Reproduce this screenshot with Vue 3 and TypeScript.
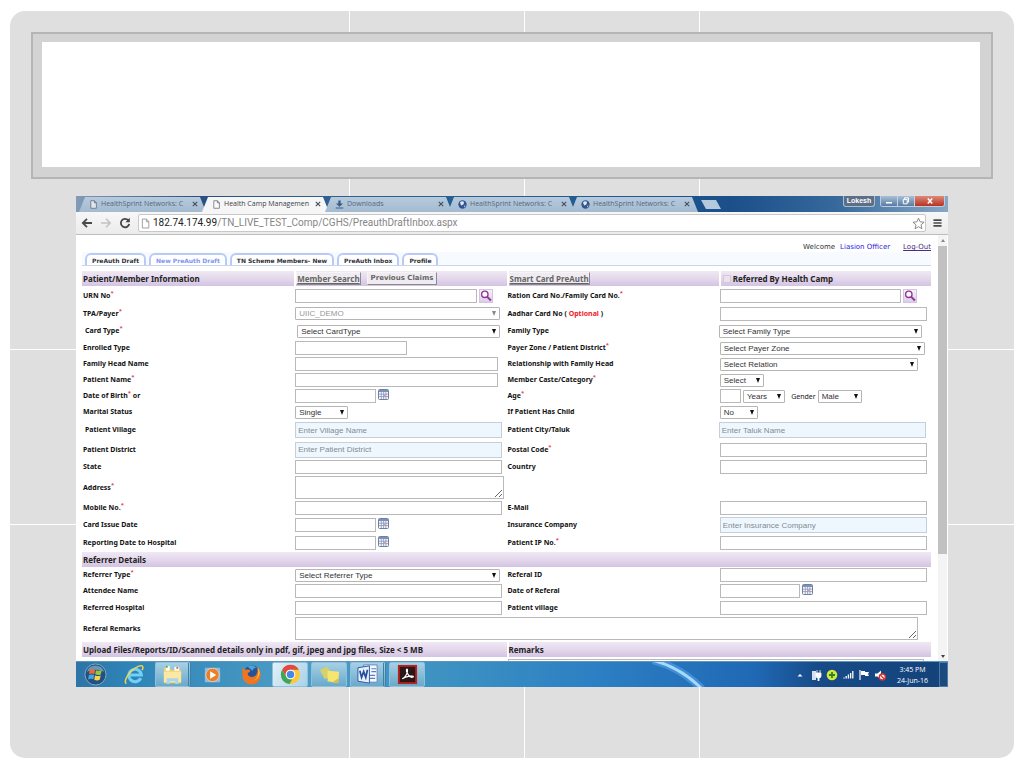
<script setup lang="ts">
type Kind = 'text' | 'select' | 'area' | 'calendar' | 'search' | 'note'

interface Control {
  kind: Kind
  id?: string
  size?: string
  value?: string
  hint?: string
  name?: string
  disabled?: boolean
}

interface Field {
  label: string
  required?: boolean
  after?: string
  optional?: boolean
  indent?: boolean
  controls: Control[]
}

interface Row {
  size: string
  fields: Field[]
  wide?: boolean
}

const text = (id: string, size = 'w98'): Control => ({ kind: 'text', id, size })
const hint = (id: string, placeholder: string): Control => ({ kind: 'text', id, size: 'w98 tinted', hint: placeholder })
const select = (id: string, value: string, size: string): Control => ({ kind: 'select', id, value, size })
const date = (id: string): Control[] => [{ kind: 'text', id, size: 'w38' }, { kind: 'calendar', name: 'Pick a date' }]

const patientRows: Row[] = [
  { size: 'h18', fields: [
    { label: 'URN No', required: true, controls: [text('urn', 'w86'), { kind: 'search', name: 'Find URN' }] },
    { label: 'Ration Card No./Family Card No.', required: true, controls: [text('ration', 'w86'), { kind: 'search', name: 'Find card' }] } ] },
  { size: 'h17', fields: [
    { label: 'TPA/Payer', required: true, controls: [{ kind: 'select', id: 'payer', value: 'UIIC_DEMO', size: 'w97', disabled: true }] },
    { label: 'Aadhar Card No', optional: true, controls: [text('aadhar')] } ] },
  { size: 'h18', fields: [
    { label: 'Card Type', required: true, indent: true, controls: [select('cardtype', 'Select CardType', 'w96 inset')] },
    { label: 'Family Type', controls: [select('familytype', 'Select Family Type', 'w96 outset')] } ] },
  { size: 'h16', fields: [
    { label: 'Enrolled Type', controls: [text('enrolled', 'w53')] },
    { label: 'Payer Zone / Patient District', required: true, controls: [select('zone', 'Select Payer Zone', 'w97')] } ] },
  { size: 'h16', fields: [
    { label: 'Family Head Name', controls: [text('head', 'w96')] },
    { label: 'Relationship with Family Head', controls: [select('relation', 'Select Relation', 'w94')] } ] },
  { size: 'h16', fields: [
    { label: 'Patient Name', required: true, controls: [text('patient', 'w96')] },
    { label: 'Member Caste/Category', required: true, controls: [select('caste', 'Select', 'w21')] } ] },
  { size: 'h16', fields: [
    { label: 'Date of Birth', required: true, after: 'or', controls: date('dob') },
    { label: 'Age', required: true, controls: [
      text('age', 'w10'),
      { kind: 'select', id: 'ageunit', value: 'Years', size: 'w20', name: 'Age unit' },
      { kind: 'note', id: 'gender', value: 'Gender' },
      select('gender', 'Male', 'w21') ] } ] },
  { size: 'h16', fields: [
    { label: 'Marital Status', controls: [select('marital', 'Single', 'w25')] },
    { label: 'If Patient Has Child', controls: [select('child', 'No', 'w18')] } ] },
  { size: 'h20', fields: [
    { label: 'Patient Village', indent: true, controls: [hint('village', 'Enter Village Name')] },
    { label: 'Patient City/Taluk', controls: [{ kind: 'text', id: 'taluk', size: 'w98 tinted outset', hint: 'Enter Taluk Name' }] } ] },
  { size: 'h19', fields: [
    { label: 'Patient District', controls: [hint('district', 'Enter Patient District')] },
    { label: 'Postal Code', required: true, controls: [text('postal')] } ] },
  { size: 'h16', fields: [
    { label: 'State', controls: [text('state')] },
    { label: 'Country', controls: [text('country')] } ] },
  { size: 'h25', fields: [
    { label: 'Address', required: true, controls: [{ kind: 'area', id: 'address', size: 'w99' }] } ] },
  { size: 'h16', fields: [
    { label: 'Mobile No.', required: true, controls: [text('mobile')] },
    { label: 'E-Mail', controls: [text('email')] } ] },
  { size: 'h18', fields: [
    { label: 'Card Issue Date', controls: date('issued') },
    { label: 'Insurance Company', controls: [hint('insurer', 'Enter Insurance Company')] } ] },
  { size: 'h17', fields: [
    { label: 'Reporting Date to Hospital', controls: date('reporting') },
    { label: 'Patient IP No.', required: true, controls: [text('ip')] } ] }
]

const referrerRows: Row[] = [
  { size: 'h16', fields: [
    { label: 'Referrer Type', required: true, controls: [select('referrer', 'Select Referrer Type', 'w97')] },
    { label: 'Referal ID', controls: [text('referalid')] } ] },
  { size: 'h16', fields: [
    { label: 'Attendee Name', controls: [text('attendee')] },
    { label: 'Date of Referal', controls: date('referaldate') } ] },
  { size: 'h17', fields: [
    { label: 'Referred Hospital', controls: [text('hospital')] },
    { label: 'Patient village', controls: [text('village2')] } ] },
  { size: 'h25', wide: true, fields: [
    { label: 'Referal Remarks', controls: [{ kind: 'area', id: 'referalremarks', size: 'w98' }] } ] }
]

const browserTabs = [
  { title: 'HealthSprint Networks: C', icon: 'page', active: false },
  { title: 'Health Camp Managemen', icon: 'page', active: true },
  { title: 'Downloads', icon: 'download', active: false },
  { title: 'HealthSprint Networks: C', icon: 'globe', active: false },
  { title: 'HealthSprint Networks: C', icon: 'globe', active: false }
]

const menu = ['PreAuth Draft', 'New PreAuth Draft', 'TN Scheme Members- New', 'PreAuth Inbox', 'Profile']
const selectedMenu = 1
</script>

<template>
  <main class="slide">
    <header class="title-frame"><div class="title-box"></div></header>

    <section class="window">
      <div class="tabstrip">
        <div v-for="(tab, i) in browserTabs" :key="i" class="btab" :class="{ active: tab.active }">
          <svg v-if="tab.icon === 'page'" class="fav" viewBox="0 0 10 10"><path d="M2 .8h4l2.2 2.3v6.1H2z M6 .8v2.4h2.2" fill="#fff" fill-opacity=".6" stroke="#5d6470" stroke-width=".8" /></svg>
          <svg v-else-if="tab.icon === 'download'" class="fav" viewBox="0 0 10 10"><path d="M3.7 .5h2.6v3.3H9L5 7.5 1 3.800h2.700zM.8 8.200h8.400v1.300H.8z" fill="#3c5c86" /></svg>
          <svg v-else class="fav" viewBox="0 0 10 10"><circle cx="5" cy="5" r="4.600" fill="#34548d" /><path d="M2.200 2.500Q4.500.2 6.800 2.200L6 5 3.400 6.200z" fill="#dce8f7" /><path d="M6.500 6.500l2-.5-1.500 2.500z" fill="#a9c2e6" /></svg>
          <span class="btitle">{{ tab.title }}</span>
          <svg class="bclose" viewBox="0 0 6 6"><path d="M.8.8l4.400 4.400M5.200.8L.8 5.200" stroke="#444d5c" stroke-width="1.100" /></svg>
        </div>
        <div class="newtab"></div>
        <div class="wincontrols">
          <span class="profile">Lokesh</span>
          <div class="wbuttons">
            <button class="wbtn" aria-label="Minimise"><svg viewBox="0 0 10 8"><path d="M2 5h6v1.600H2z" fill="#fff" /></svg></button>
            <button class="wbtn" aria-label="Restore"><svg viewBox="0 0 10 8"><path d="M3.500 2V.8h4v4.400H6.400M2.300 2.400h3.900v4.400H2.300z" fill="none" stroke="#fff" /></svg></button>
            <button class="wbtn close" aria-label="Close"><svg viewBox="0 0 10 8"><path d="M2.800 1.500l4.400 5M7.200 1.500l-4.400 5" stroke="#fff" stroke-width="1.500" /></svg></button>
          </div>
        </div>
      </div>

      <div class="toolbar">
        <svg class="nav" viewBox="0 0 12 12"><path d="M11 6H2M6 1.800L1.800 6 6 10.200" fill="none" stroke="#4a4a4a" stroke-width="1.800" /></svg>
        <svg class="nav" viewBox="0 0 12 12"><path d="M1 6h9M6 1.800L10.200 6 6 10.200" fill="none" stroke="#c3c3c3" stroke-width="1.500" /></svg>
        <svg class="nav" viewBox="0 0 12 12"><path d="M9.300 3.400A4.200 4.200 0 1 0 10.200 7" fill="none" stroke="#444" stroke-width="1.800" /><path d="M10.800.8v4.400H6.400z" fill="#444" /></svg>
        <div class="omnibox">
          <svg class="pageicon" viewBox="0 0 10 12"><path d="M1.500 1h4.500l2.700 2.800V11H1.500z M6 1v3h2.700" fill="#fff" stroke="#8c8c8c" stroke-width=".9" /></svg>
          <span class="url"><b>182.74.174.99</b>/TN_LIVE_TEST_Comp/CGHS/PreauthDraftInbox.aspx</span>
          <svg class="star" viewBox="0 0 14 14"><path d="M7 1.200l1.700 4 4.300.4-3.300 2.800 1 4.300L7 10.400l-3.700 2.300 1-4.300L1 5.600l4.300-.4z" fill="#fff" stroke="#777" stroke-width=".9" /></svg>
        </div>
        <svg class="burger" viewBox="0 0 10 10"><path d="M.5 1.800h9M.5 5h9M.5 8.200h9" stroke="#4a4a4a" stroke-width="1.900" /></svg>
      </div>

      <div class="viewport">
        <form class="page" @submit.prevent>
          <div class="welcome">
            <span>Welcome</span><span class="user">Liasion Officer</span><a href="#logout">Log-Out</a>
          </div>
          <nav class="menu">
            <a v-for="(item, i) in menu" :key="item" href="#menu" class="mtab" :class="{ selected: i === selectedMenu }">{{ item }}</a>
          </nav>

          <div class="band four">
            <h2>Patient/Member Information</h2>
            <div class="actions">
              <button type="button" class="lined">Member Search</button>
              <button type="button">Previous Claims</button>
            </div>
            <div class="actions"><button type="button" class="lined">Smart Card PreAuth</button></div>
            <div class="actions camp"><input id="camp" type="checkbox"><label for="camp">Referred By Health Camp</label></div>
          </div>

          <template v-for="(group, g) in [patientRows, referrerRows]" :key="g">
            <div v-if="g === 1" class="band"><h2>Referrer Details</h2></div>
            <div v-for="(row, r) in group" :key="r" class="row" :class="[row.size, { wide: row.wide }]">
              <template v-for="field in row.fields" :key="field.label">
                <label class="label" :class="{ indent: field.indent }" :for="field.controls[0].id">
                  {{ field.label }}<sup v-if="field.required">*</sup><template v-if="field.after">&nbsp;{{ field.after }}</template><template v-if="field.optional"> ( <em>Optional</em> )</template>
                </label>
                <div class="controls">
                  <template v-for="(c, k) in field.controls" :key="k">
                    <input v-if="c.kind === 'text'" :id="c.id" type="text" class="box" :class="c.size" :placeholder="c.hint">
                    <textarea v-else-if="c.kind === 'area'" :id="c.id" class="box area" :class="c.size"></textarea>
                    <span v-else-if="c.kind === 'select'" class="pick" :class="[c.size, { off: c.disabled }]">
                      <select :id="c.id" :disabled="c.disabled" :aria-label="c.name"><option>{{ c.value }}</option></select>
                    </span>
                    <button v-else-if="c.kind === 'search'" type="button" class="find" :aria-label="c.name">
                      <svg viewBox="1 1 12 12"><circle cx="5.800" cy="5.300" r="3.200" fill="#fff" stroke="#93349c" stroke-width="1.400" /><path d="M8 7.600l3.900 3.900" stroke="#93349c" stroke-width="2" /></svg>
                    </button>
                    <button v-else-if="c.kind === 'calendar'" type="button" class="cal" :aria-label="c.name">
                      <svg viewBox="0 0 11 11"><rect x=".5" y=".5" width="10" height="10" rx="1" fill="#f5f7fb" stroke="#6d80a3" /><path d="M1 1h9v2H1z" fill="#7c92bd" /><path d="M1 5.200h9M1 7.600h9M3.300 3v7M5.600 3v7M7.900 3v7" stroke="#7d8daf" stroke-width=".7" /><path d="M6 5.600h1.600v1.600H6z" fill="#d99" /></svg>
                    </button>
                    <label v-else class="note" :for="c.id">{{ c.value }}</label>
                  </template>
                </div>
              </template>
            </div>
          </template>

          <div class="band two">
            <h2>Upload Files/Reports/ID/Scanned details only in pdf, gif, jpeg and jpg files, Size &lt; 5 MB</h2>
            <h2><label for="remarks">Remarks</label></h2>
          </div>
          <div class="tail"><span></span><textarea id="remarks" class="box"></textarea></div>
        </form>
        <div class="scroll"><i class="up"></i><div class="thumb"></div><i class="down"></i></div>
      </div>

      <footer class="taskbar">
        <svg class="arc" viewBox="0 0 100 26" preserveAspectRatio="none"><path d="M0-2Q28 5 50 28" fill="none" stroke="#4ea4ee" stroke-opacity=".6" stroke-width="8" /><path d="M0-2Q28 5 50 28" fill="none" stroke="#a9d8fb" stroke-width="3" /></svg>
        <button class="task" aria-label="Start">
          <svg viewBox="0 0 24 24"><circle cx="12" cy="12" r="11" fill="#225180" stroke="#80abc8" /><path d="M3 9a9.500 9.500 0 0 1 18 0q-9-4-18 0z" fill="#9cc3dc" fill-opacity=".6" /><path d="M6 7.500q3-1.800 5.500-.4L10.800 11.500q-2.700-1.200-5.600.3z" fill="#ee6a35" /><path d="M12.500 7.500q3 1.400 6-.2l-1 4.600q-3 1.300-5.800-.2z" fill="#94c83d" /><path d="M5 12.800q3-1.500 5.600-.2l-.8 4.400q-2.700-1.200-5.500.3z" fill="#48a3e0" /><path d="M11.500 13q3 1.300 5.900.1l-1 4.500q-3 1.200-5.700-.2z" fill="#fbd04a" /></svg>
        </button>
        <button class="task" aria-label="Internet Explorer">
          <svg viewBox="0 0 24 24"><path d="M18.500 15.800a6.500 6.500 0 1 1 .6-3.300H7" fill="none" stroke="#71d0f7" stroke-width="3.200" /><path d="M3.500 21.500C0 19 6.500 7.500 16 3.500c5-2 5.500.5 4 4" fill="none" stroke="#f8d648" stroke-width="1.500" /></svg>
        </button>
        <button class="task open stacked" aria-label="File Explorer">
          <svg viewBox="0 0 24 24"><path d="M3 5h6l1.500 2H21v14H3z" fill="#f2ce6b" /><path d="M5 3h4v5H5zM14 4h5v4h-5z" fill="#fff" /><path d="M5 3h2v2H5z" fill="#4aae56" /><path d="M16 4h2v2h-2z" fill="#d96b42" /><path d="M3 9h18v11H3z" fill="#fbe8a3" /><path d="M6 22v-6h12v6h-3v-3H9v3z" fill="#a9d5ee" /></svg>
        </button>
        <button class="task" aria-label="Media Player">
          <svg viewBox="0 0 24 24"><rect x="4" y="5" width="16" height="15" rx="1" fill="#8cbbe0" /><circle cx="12" cy="12.500" r="7" fill="#ef7d25" stroke="#fff" stroke-opacity=".5" /><path d="M9.500 8.500l6.500 4-6.500 4z" fill="#fff" /></svg>
        </button>
        <button class="task" aria-label="Firefox">
          <svg viewBox="0 0 24 24"><circle cx="12.500" cy="11" r="8.500" fill="#22539b" /><path d="M8 4q5-3 9 1-3 0-4 3z" fill="#48a5d8" /><path d="M3 5q1 2 3 2 3-1 5 1-1 2-3 2.500 0 4 4 4 5 0 6-4.500 1-3-1-6 5 3.500 4.500 9A9.500 9.500 0 0 1 2.500 13Q2 8 3 5z" fill="#ef7521" /><path d="M19 5q4 7-2 12-3 2.500-7 2 8 0 9-8z" fill="#fbc334" /></svg>
        </button>
        <button class="task open lit" aria-label="Chrome">
          <svg viewBox="0 0 24 24"><circle cx="12" cy="12" r="10" fill="#fbc93b" /><path d="M3.300 7A10 10 0 0 1 20.700 7H12a5 5 0 0 0-4.300 7.500z" fill="#e04a3f" /><path d="M3.300 7l4.400 7.500A5 5 0 0 0 14 16.600L11 22A10 10 0 0 1 3.300 7z" fill="#3ca65a" /><circle cx="12" cy="12" r="5" fill="#fff" /><circle cx="12" cy="12" r="3.900" fill="#4887e8" /></svg>
        </button>
        <button class="task open" aria-label="Sticky Notes">
          <svg viewBox="0 0 24 24"><path d="M2 7l8-3 5 9-8 4z" fill="#d5d26b" /><path d="M10 8l12 1-1 12-11-2z" fill="#f6e66f" /><path d="M15 20l6 1 .4-5z" fill="#cfc052" /></svg>
        </button>
        <button class="task open stacked" aria-label="Word">
          <svg viewBox="0 0 24 24"><path d="M8 2h14v18H8z" fill="#f6f9fd" stroke="#6a87bd" /><path d="M16 6h5M16 9h5M9 13h11M9 16h11" stroke="#5a7fc4" stroke-width="1.300" /><path d="M2 5l12-2v18L2 19z" fill="#e9f0fb" stroke="#2c56a4" /><path d="M4 8l1.800 7L8 9l2.200 6L12 7" fill="none" stroke="#254f9f" stroke-width="1.800" /></svg>
        </button>
        <button class="task open" aria-label="Adobe Reader">
          <svg viewBox="0 0 24 24"><rect x="3" y="3" width="18" height="18" fill="#2b1719" stroke="#b3251e" stroke-width="2" /><path d="M6.500 16.500c4-2 6-7 5.500-9.500-1-2-2 1 0 4 1.500 3 4 4.500 6 3.500 1-1.500-7-1.500-11.500 2z" fill="none" stroke="#fff" stroke-width="1.200" /></svg>
        </button>
        <div class="tray">
          <svg viewBox="0 0 12 12"><path d="M3.500 7.500L6 5l2.500 2.500z" fill="#fff" /></svg>
          <svg viewBox="0 0 12 12"><path d="M2 2h4v9H2z" fill="#d8e2ee" /><path d="M6 4h5v3q0 2-2 2v3H8V9Q6 9 6 7zM7 1v3M10 1v3" fill="#fff" stroke="#fff" stroke-width=".8" /></svg>
          <svg viewBox="0 0 12 12"><circle cx="6" cy="6" r="5.300" fill="#d6e63a" /><path d="M6 3v6M3 6h6" stroke="#27842c" stroke-width="1.800" /></svg>
          <svg viewBox="0 0 12 12"><path d="M2 9.500v-1M4.200 9.500v-2.500M6.400 9.500V5.500M8.600 9.500V4M10.800 9.500V2" stroke="#fff" stroke-width="1.300" /></svg>
          <svg viewBox="0 0 12 12"><path d="M2 1v10" stroke="#fff" stroke-width="1.200" /><path d="M3 2h4v1h4l-1 2 1 2H7V6H3z" fill="#fff" /></svg>
          <svg viewBox="0 0 12 12"><path d="M1 4.500h2.500L7 1.500v9L3.500 7.500H1z" fill="#fff" /><circle cx="8.300" cy="8" r="3" fill="#fff" stroke="#d8322a" stroke-width="1.300" /><path d="M6.300 6l4 4" stroke="#d8322a" stroke-width="1.300" /></svg>
        </div>
        <time class="clock"><span>3:45 PM</span><span>24-Jun-16</span></time>
        <button class="desk" aria-label="Show desktop"></button>
      </footer>
    </section>
  </main>
</template>

<style>
body {
  margin: 0;
  background: #fff;
}
</style>

<style scoped>
* {
  box-sizing: border-box;
}

button {
  font: inherit;
  margin: 0;
  padding: 0;
  border: 0;
  background: none;
}

svg {
  display: block;
}

.slide {
  margin: 11px 10px 10px;
  padding: 21px 21px 71px;
  border-radius: 15px;
  background:
    linear-gradient(#fff, #fff) 339px 0 / 1px 100% no-repeat,
    linear-gradient(#fff, #fff) 514px 0 / 1px 100% no-repeat,
    linear-gradient(#fff, #fff) 689px 0 / 1px 100% no-repeat,
    linear-gradient(#fff, #fff) 0 338px / 100% 1px no-repeat,
    linear-gradient(#fff, #fff) 0 513px / 100% 1px no-repeat,
    #dfdfdf;
}

.title-frame {
  border: 2px solid #b5b5b5;
  background: #d3d3d3;
  padding: 8px 11px 10px 9px;
}

.title-box {
  height: 125px;
  background: #fff;
}

.window {
  margin: 17px 45px 0;
  font-family: "Liberation Sans", Arial, sans-serif;
  font-size: 8px;
  background: #fff;
}

.tabstrip {
  display: flex;
  height: 16px;
  padding-left: 3px;
  background: linear-gradient(90deg, #839bb8 0, #2a4f85 14%, #2d6290 30%, #205d92 60%, #1b4f8a 75%, #36689b 87%, #88a7c4 100%);
}

.btab {
  flex: 0 1 127px;
  min-width: 0;
  margin-right: -4px;
  padding: 0 6px 0 10px;
  display: flex;
  align-items: center;
  gap: 3px;
  clip-path: polygon(6px 1px, 121px 1px, 100% 100%, 0 100%);
  background: linear-gradient(#b9cbdd, #a3bbd1);
  color: #55677f;
  font-family: "Open Sans", "Noto Sans", sans-serif;
  font-size: 7px;
}

.btab.active {
  background: #f6f6f6;
  color: #3a3f48;
}

.fav {
  width: 9px;
  height: 9px;
  flex: none;
}

.btitle {
  flex: 1;
  white-space: nowrap;
  line-height: 14px;
}

.bclose {
  width: 6px;
  height: 6px;
  margin-right: 2px;
  flex: none;
}

.newtab {
  width: 20px;
  height: 9px;
  margin: 4px 0 0 7px;
  background: #b5c9dd;
  clip-path: polygon(0 0, 15px 0, 100% 100%, 5px 100%);
}

.wincontrols {
  margin: 0 3px 0 auto;
  display: flex;
  gap: 5px;
  height: 11px;
}

.profile {
  width: 32px;
  text-align: center;
  line-height: 10px;
  font-size: 7px;
  font-weight: bold;
  color: #fff;
  background: #5d6f86;
  border: 1px solid #a9bdd2;
  border-top: 0;
  border-radius: 0 0 3px 3px;
}

.wbuttons {
  display: flex;
  border: 1px solid #bccde0;
  border-top: 0;
  border-radius: 0 0 3px 3px;
  overflow: hidden;
}

.wbtn {
  width: 17px;
  background: linear-gradient(#a9bfd6, #587ba4);
  border-right: 1px solid #c4d3e2;
}

.wbtn svg {
  width: 10px;
  height: 8px;
  margin: 0 auto;
}

.wbtn.close {
  width: 29px;
  border: 0;
  background: linear-gradient(#dc8a7c, #b8321f);
}

.toolbar {
  display: flex;
  align-items: center;
  gap: 7px;
  height: 23px;
  padding: 0 6px 0 5px;
  background: linear-gradient(#f7f7f7, #ececec);
  border-bottom: 1px solid #bdbdbd;
}

.nav {
  width: 12px;
  height: 12px;
  flex: none;
}

.omnibox {
  flex: 1;
  display: flex;
  align-items: center;
  gap: 3px;
  height: 18px;
  padding: 0 0 0 2px;
  background: #fff;
  border: 1px solid #c8c8c8;
  border-radius: 2px;
}

.pageicon {
  width: 9px;
  height: 11px;
}

.url {
  flex: 1;
  font-family: Roboto, "Noto Sans", sans-serif;
  font-size: 10px;
  line-height: 14px;
  color: #858585;
}

.url b {
  font-weight: normal;
  color: #222;
}

.star {
  width: 13px;
  height: 13px;
}

.burger {
  width: 9px;
  height: 10px;
}

.viewport {
  display: flex;
  height: 426px;
  overflow: hidden;
}

.page {
  flex: 1;
  min-width: 0;
  padding: 0 7px 0 6px;
}

.welcome {
  display: flex;
  justify-content: flex-end;
  height: 17px;
  line-height: 10px;
  padding-top: 7px;
  font-family: "DejaVu Sans", Verdana, sans-serif;
  font-size: 7px;
  color: #333;
}

.user {
  margin: 0 13px 0 5px;
  color: #2a22dd;
}

.welcome a {
  color: #4a2a86;
}

.menu {
  display: flex;
  align-items: flex-end;
  gap: 3px;
  height: 14px;
  padding-left: 3px;
  margin-bottom: 5px;
  background: #f7faff;
  border-bottom: 1px solid #c6d5f3;
}

.mtab {
  height: 12px;
  padding: 0 5px;
  border: 2px solid #b9cbf5;
  border-bottom: 0;
  border-radius: 6px 6px 0 0;
  background: #fff;
  color: #333;
  font-family: "DejaVu Sans", Verdana, sans-serif;
  font-size: 6px;
  font-weight: bold;
  line-height: 11px;
  text-decoration: none;
  white-space: nowrap;
}

.mtab.selected {
  color: #8193f0;
}

.band {
  display: grid;
  align-items: center;
  height: 15px;
  margin: 1px 0 0;
  background: linear-gradient(#f0e8f4, #e4d8ec 50%, #d3c3e2);
}

.menu + .band {
  margin-top: 0;
  margin-bottom: 1px;
}

.four {
  grid-template-columns: repeat(4, minmax(0, 1fr));
}

.two {
  grid-template-columns: repeat(2, minmax(0, 1fr));
}

.band > * {
  display: flex;
  align-items: center;
  height: 15px;
}

.band > * + * {
  border-left: 2px solid #fff;
}

.band h2 {
  margin: 0;
  padding-left: 1px;
  font-family: "Noto Sans", Tahoma, sans-serif;
  font-size: 8px;
  font-weight: bold;
  line-height: 14px;
  color: #222;
  white-space: nowrap;
}

.band h2 + h2 {
  padding-left: 0;
}

.actions {
  gap: 6px;
  font-family: "DejaVu Sans", Verdana, sans-serif;
  font-size: 7px;
  font-weight: bold;
}

.actions button {
  display: flex;
  align-items: center;
  height: 13px;
  padding: 0 3px;
  line-height: 11px;
  color: #666;
  background: #efebf1;
  border: 1px solid #f6f3f8;
  border-right-color: #8e8894;
  border-bottom-color: #8e8894;
  white-space: nowrap;
}

.actions button.lined {
  padding: 0;
  font-family: "Noto Sans", Tahoma, sans-serif;
  font-size: 8px;
  text-decoration: underline;
}

.camp {
  gap: 2px;
  font-family: "Noto Sans", Tahoma, sans-serif;
  font-size: 8px;
  color: #222;
}

.camp input {
  appearance: none;
  width: 8px;
  height: 8px;
  margin: 0 0 0 2px;
  background: #eae2ef;
  border: 1px solid #d2c8da;
}

.row {
  display: grid;
  grid-template-columns: repeat(4, minmax(0, 1fr));
  align-items: center;
}

.row.wide {
  grid-template-columns: minmax(0, 1fr) minmax(0, 3fr);
}

.h16 { height: 16px; }
.h17 { height: 17px; }
.h18 { height: 18px; }
.h19 { height: 19px; }
.h20 { height: 20px; }
.h25 { height: 25px; }

.label {
  padding-left: 1px;
  font-family: "Noto Sans", Tahoma, sans-serif;
  font-size: 7px;
  font-weight: bold;
  line-height: 12px;
  color: #111;
  white-space: nowrap;
}

.label.indent {
  padding-left: 3px;
}

.label sup {
  color: #e8404a;
  line-height: 0;
  vertical-align: 3px;
  font-size: 6px;
}

.label em {
  font-style: normal;
  color: #f0202a;
}

.controls {
  display: flex;
  align-items: center;
  gap: 2px;
  padding-left: 1px;
}

.box {
  display: block;
  height: 14px;
  margin: 0;
  padding: 0 2px;
  border: 1px solid #b9b9b9;
  border-radius: 0;
  background: #fff;
  font: inherit;
  color: #444;
}

.box::placeholder {
  color: #7f8b94;
  opacity: 1;
}

.box.tinted {
  height: 16px;
  background: #eff7fe;
  border-color: #c3d0da;
}

.box.area {
  height: 23px;
}

.pick {
  position: relative;
  display: block;
}

.pick select {
  appearance: none;
  display: block;
  width: 100%;
  height: 13px;
  margin: 0;
  padding: 0 10px 0 3px;
  border: 1px solid #b5b5b5;
  border-radius: 1px;
  background: #fff;
  font: inherit;
  line-height: 11px;
  color: #333;
  opacity: 1;
}

.pick::after {
  content: "";
  position: absolute;
  right: 4px;
  top: 4px;
  border: 2px solid transparent;
  border-top: 5px solid #111;
  border-bottom: 0;
  pointer-events: none;
}

.pick.off select {
  color: #999;
}

.pick.off::after {
  border-top-color: #888;
}

.inset { margin-left: 2px; }
.outset { margin-left: -1px; }

.w10 { width: 10%; }
.w18 { width: 18%; }
.w20 { width: 20%; }
.w21 { width: 21%; }
.w25 { width: 25%; }
.w38 { width: 38%; }
.w53 { width: 53%; }
.w86 { width: 86%; }
.w94 { width: 94%; }
.w96 { width: 96%; }
.w97 { width: 97%; }
.w98 { width: 98%; }
.w99 { width: 99%; }

.note {
  margin-left: 4px;
  font-family: "Noto Sans", Tahoma, sans-serif;
  font-size: 7px;
  color: #222;
}

.find {
  width: 14px;
  height: 14px;
  align-self: flex-start;
  background: linear-gradient(#f8f4fa, #dccce8);
  border: 1px solid #d3c5df;
}

.find svg {
  width: 12px;
  height: 12px;
}

.cal svg {
  width: 11px;
  height: 11px;
}

.cal {
  align-self: flex-start;
}

.tail {
  display: grid;
  grid-template-columns: repeat(2, minmax(0, 1fr));
  padding-top: 2px;
}

.tail .box {
  width: 98%;
  height: 24px;
  margin-left: 1px;
}

.scroll {
  display: flex;
  flex-direction: column;
  align-items: center;
  width: 9px;
  margin-right: 1px;
  padding: 4px 0 3px;
  background: #f4f4f4;
}

.scroll i {
  border: 2px solid transparent;
}

.scroll .up {
  border-bottom: 3px solid #888;
  border-top: 0;
}

.scroll .down {
  margin-top: auto;
  border-top: 3px solid #444;
  border-bottom: 0;
}

.thumb {
  width: 9px;
  height: 308px;
  margin-top: 4px;
  background: #c1c1c1;
}

.taskbar {
  position: relative;
  display: flex;
  align-items: stretch;
  gap: 3px;
  height: 26px;
  padding-left: 1px;
  border-top: 1px solid #5f95bb;
  background: linear-gradient(90deg, #2e74a6 0, #2e84b7 6%, #4c9cc4 25%, #3d92c2 42%, #2c7fc3 60%, #2068b4 78%, #174b88 85%, #14427a 100%);
}

.arc {
  position: absolute;
  left: 66%;
  top: 0;
  width: 100px;
  height: 25px;
}

.task {
  width: 36px;
}

.task svg {
  width: 23px;
  height: 23px;
  margin: 0 auto;
}

.task.open {
  background: linear-gradient(#a6d0e5, #69a9cb);
  border: 1px solid #8fc1dc;
  border-radius: 2px;
}

.task.stacked {
  border-right: 3px double #3f7fa5;
}

.task.lit {
  background: linear-gradient(120deg, #e1f1f8, #a9d2e8);
}

.tray {
  margin-left: auto;
  display: flex;
  align-items: center;
  gap: 4px;
}

.tray svg {
  width: 12px;
  height: 12px;
}

.clock {
  display: flex;
  flex-direction: column;
  justify-content: center;
  width: 47px;
  text-align: center;
  font-family: "Open Sans", "Noto Sans", sans-serif;
  font-size: 7px;
  line-height: 11px;
  color: #fff;
}

.desk {
  width: 9px;
  border: 1px solid #4c7aa8;
  background: #1c4a7d;
}
</style>
